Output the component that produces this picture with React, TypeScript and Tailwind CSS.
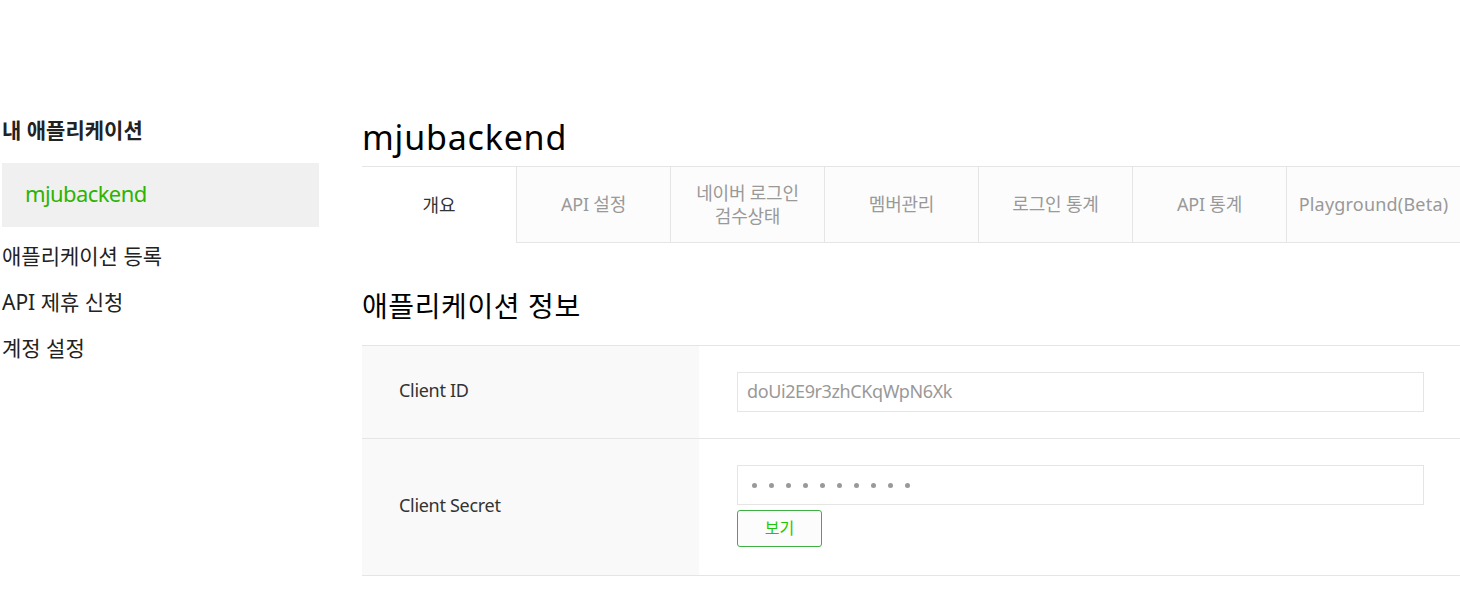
const font = { fontFamily: '"Noto Sans", "Noto Sans CJK KR", sans-serif' };

const tabs = ["개요", "API 설정", "네이버 로그인\n검수상태", "멤버관리", "로그인 통계", "API 통계", "Playground(Beta)"];

export default function App() {
  return (
    <div className="flex min-h-[591px] bg-white pt-[112px] text-[#222]" style={font}>
      <aside className="ml-[2px] w-[317px] shrink-0">
        <h2 className="h-[36px] text-[21px] font-bold leading-[36px] tracking-[0px] text-[#222]">내 애플리케이션</h2>
        <div className="mt-[15px] flex h-[64px] items-center bg-[#f0f0f0] pl-[23px] pb-[4px] text-[22px] tracking-[-0.6px] text-[#2db400]">mjubackend</div>
        <ul className="mt-[7px] text-[21px] tracking-[0px] text-[#222]">
          <li className="h-[46px] leading-[44px]">애플리케이션 등록</li>
          <li className="h-[46px] leading-[44px]">API 제휴 신청</li>
          <li className="h-[46px] leading-[44px]">계정 설정</li>
        </ul>
      </aside>
      <main className="ml-[43px] flex-1">
        <h1 className="h-[54px] text-[34px] leading-[50px] tracking-[0.8px] text-black">mjubackend</h1>
        <nav className="flex h-[77px] border-y border-[#e5e5e5]">
          {tabs.map((t, i) => (
            <div
              key={t}
              className={
                i === 0
                  ? "-mb-px flex w-[154px] items-center justify-center whitespace-pre-line bg-white text-center text-[18px] leading-[23px] text-[#333]"
                  : i === tabs.length - 1
                  ? "flex flex-1 items-center justify-center border-l border-[#e5e5e5] bg-[#fcfcfc] text-center text-[18px] leading-[23px] tracking-[0.2px] text-[#999]"
                  : "flex w-[154px] items-center justify-center whitespace-pre-line border-l border-[#e5e5e5] bg-[#fcfcfc] text-center text-[18px] leading-[23px] tracking-[-0.2px] text-[#999]"
              }
            >
              {t}
            </div>
          ))}
        </nav>
        <h3 className="mt-[44px] text-[28px] leading-[38px] tracking-[0.6px] text-black">애플리케이션 정보</h3>
        <div className="mt-[20px] border-t border-[#e5e5e5]">
          <div className="flex h-[93px] border-b border-[#e5e5e5]">
            <div className="flex w-[337px] items-center bg-[#f9f9f9] pb-[4px] pl-[37px] text-[18px] tracking-[-0.3px] text-[#333]">Client ID</div>
            <div className="flex-1 pl-[38px] pr-[36px] pt-[26px]">
              <div className="flex h-[40px] items-center border border-[#e5e5e5] px-[9px] pb-[2px] text-[18px] tracking-[-0.4px] text-[#999]">doUi2E9r3zhCKqWpN6Xk</div>
            </div>
          </div>
          <div className="flex h-[137px] border-b border-[#e5e5e5]">
            <div className="flex w-[337px] items-center bg-[#f9f9f9] pb-[4px] pl-[37px] text-[18px] tracking-[-0.3px] text-[#333]">Client Secret</div>
            <div className="flex-1 pl-[38px] pr-[36px] pt-[26px]">
              <div className="flex h-[40px] items-center gap-[12px] border border-[#e5e5e5] px-[14px]">
                {Array.from({ length: 10 }).map((_, i) => (
                  <span key={i} className="h-[5px] w-[5px] rounded-full bg-[#999]" />
                ))}
              </div>
              <button className="mt-[5px] h-[37px] w-[85px] rounded-[3px] border border-[#3cb043] bg-[#fcfcfc] pb-[2px] text-[16px] text-[#1ec800]">보기</button>
            </div>
          </div>
        </div>
      </main>
    </div>
  );
}
